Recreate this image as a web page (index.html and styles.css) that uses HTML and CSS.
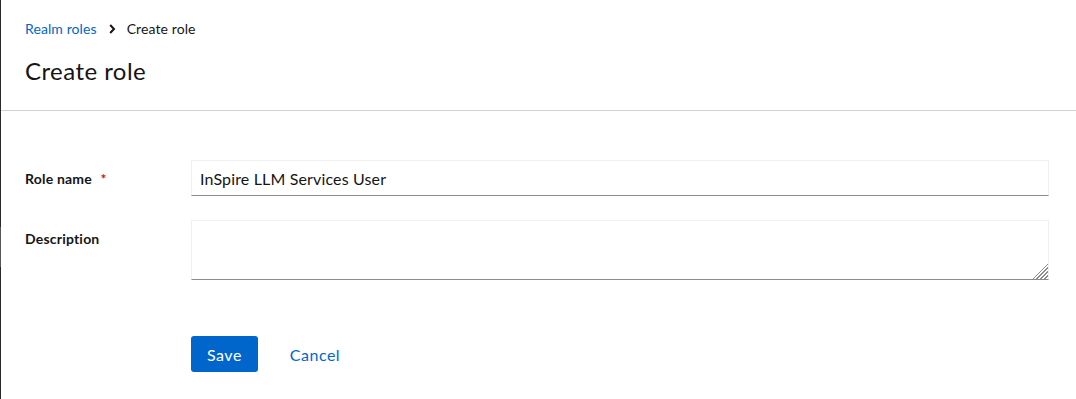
FILE: index.html
```html
<!DOCTYPE html>
<html>

<head>
    <meta charset="utf-8">
    <title>Create role</title>
    <link rel="stylesheet" href="styles.css">
</head>

<body>
    <div class="sidebar-edge"></div>
    <main class="page">
        <section class="page-header">
            <nav class="breadcrumb">
                <a href="#">Realm roles</a>
                <span class="divider">
                    <svg width="7" height="10" viewBox="0 0 7 10">
                        <path d="M1.2 1 L5 5 L1.2 9" fill="none" stroke="#151515" stroke-width="2"/>
                    </svg>
                </span>
                <span class="current">Create role</span>
            </nav>
            <h1>Create role</h1>
        </section>
        <section class="page-body">
            <form class="role-form">
                <div class="form-row">
                    <label for="name">Role name <span class="required">*</span></label>
                    <input id="name" type="text" value="InSpire LLM Services User">
                </div>
                <div class="form-row">
                    <label for="desc" class="top">Description</label>
                    <textarea id="desc"></textarea>
                </div>
                <div class="form-actions">
                    <button type="button" class="btn-primary">Save</button>
                    <button type="button" class="btn-link">Cancel</button>
                </div>
            </form>
        </section>
    </main>
</body>

</html>
```

FILE: styles.css
```css
html {
    height: 100%;
    font-family: 'Lato', 'Open Sans', sans-serif;
    color: #151515;
}

body {
    height: inherit;
    margin: 0;
    display: flex;
    background: #fff;
}

.sidebar-edge {
    width: 1px;
    flex: none;
    background: linear-gradient(#26292d 0, #26292d 227px, #55585b 227px, #55585b 267px, #26292d 267px);
}

.page {
    flex: 1;
}

.page-header {
    padding: 18px 24px 25px;
    border-bottom: 1px solid #d2d2d2;
}

.breadcrumb {
    display: flex;
    align-items: center;
    font-size: 14px;
    line-height: 21px;
    letter-spacing: 0.1px;
}

.breadcrumb a {
    color: #0066cc;
    text-decoration: none;
}

.breadcrumb .divider {
    display: flex;
    margin: 0 11px 0 12px;
}

h1 {
    margin: 17px 0 0;
    font-size: 24px;
    font-weight: 400;
    line-height: 29px;
    letter-spacing: 0.45px;
}

.page-body {
    padding: 49px 27px 24px 24px;
}

.form-row {
    display: grid;
    grid-template-columns: 150px 1fr;
    column-gap: 16px;
    align-items: center;
    margin-bottom: 24px;
}

.form-row label {
    font-size: 14px;
    font-weight: 700;
    letter-spacing: 0.2px;
}

.form-row label.top {
    align-self: start;
    padding-top: 10px;
}

.required {
    color: #c9190b;
    margin-left: 5px;
}

input,
textarea {
    box-sizing: border-box;
    font-family: inherit;
    font-size: 16px;
    letter-spacing: 0.15px;
    color: #151515;
    border: 1px solid #f0f0f0;
    border-bottom-color: #8a8d90;
    padding: 6px 8px;
    margin: 0;
    outline: none;
}

input {
    height: 36px;
}

textarea {
    height: 60px;
    resize: vertical;
    display: block;
}

textarea::-webkit-resizer {
    background:
        linear-gradient(to bottom right, #fff 50%, transparent 50%),
        repeating-linear-gradient(-45deg, #fff 0 1.5px, #8a8d90 1.5px 3px);
}

.form-actions {
    display: flex;
    gap: 16px;
    margin-top: 56px;
    margin-left: 166px;
}

.form-actions button {
    font-family: inherit;
    font-size: 16px;
    letter-spacing: 0.5px;
    height: 36px;
    padding: 0 16px;
    border: 0;
    border-radius: 3px;
    cursor: pointer;
}

.btn-primary {
    background: #0066cc;
    color: #fff;
}

.btn-link {
    background: none;
    color: #0066cc;
}
```
